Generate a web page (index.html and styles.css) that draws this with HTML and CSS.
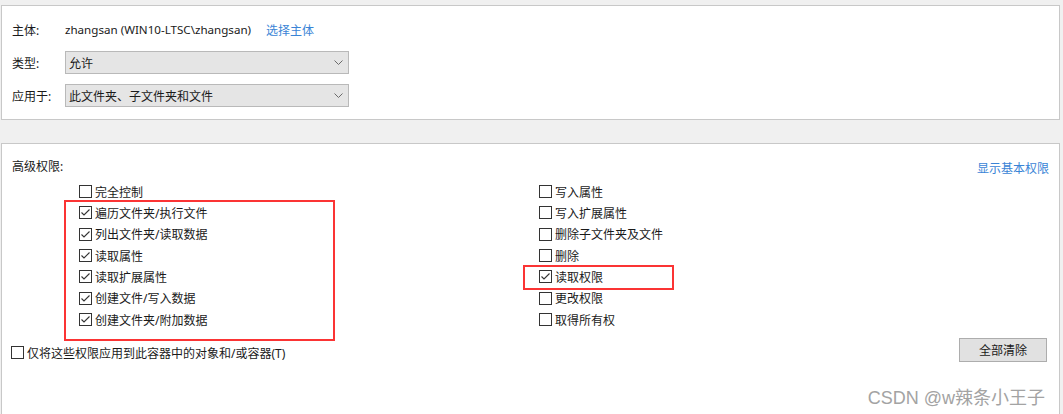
FILE: index.html
```html
<!DOCTYPE html>
<html>
<head>
<meta charset="utf-8">
<title>高级安全设置 - 权限项目</title>
<link rel="stylesheet" href="styles.css">
</head>
<body>

<div class="panel top">
  <div class="field">
    <span class="label">主体:</span>
    <span class="principal">zhangsan (WIN10-LTSC\zhangsan)</span>
    <a class="link pick" href="#">选择主体</a>
  </div>
  <div class="field">
    <span class="label">类型:</span>
    <div class="select">
      <span>允许</span>
      <svg class="chev" width="9" height="5" viewBox="0 0 9 5"><polyline points="0.5,0.5 4.5,4.5 8.5,0.5" fill="none" stroke="#6a6a6a" stroke-width="1"/></svg>
    </div>
  </div>
  <div class="field">
    <span class="label">应用于:</span>
    <div class="select">
      <span>此文件夹、子文件夹和文件</span>
      <svg class="chev" width="9" height="5" viewBox="0 0 9 5"><polyline points="0.5,0.5 4.5,4.5 8.5,0.5" fill="none" stroke="#6a6a6a" stroke-width="1"/></svg>
    </div>
  </div>
</div>

<div class="panel bottom">
  <div class="head">
    <span>高级权限:</span>
    <a class="link" href="#">显示基本权限</a>
  </div>

  <div class="perms">
    <div class="col">
      <label class="cb"><span class="box"></span>完全控制</label>
      <label class="cb"><span class="box on"><svg width="11" height="11" viewBox="0 0 11 11"><polyline points="1.5,5.5 4,8 9.5,2.5" fill="none" stroke="#333" stroke-width="1.1"/></svg></span>遍历文件夹/执行文件</label>
      <label class="cb"><span class="box on"><svg width="11" height="11" viewBox="0 0 11 11"><polyline points="1.5,5.5 4,8 9.5,2.5" fill="none" stroke="#333" stroke-width="1.1"/></svg></span>列出文件夹/读取数据</label>
      <label class="cb"><span class="box on"><svg width="11" height="11" viewBox="0 0 11 11"><polyline points="1.5,5.5 4,8 9.5,2.5" fill="none" stroke="#333" stroke-width="1.1"/></svg></span>读取属性</label>
      <label class="cb"><span class="box on"><svg width="11" height="11" viewBox="0 0 11 11"><polyline points="1.5,5.5 4,8 9.5,2.5" fill="none" stroke="#333" stroke-width="1.1"/></svg></span>读取扩展属性</label>
      <label class="cb"><span class="box on"><svg width="11" height="11" viewBox="0 0 11 11"><polyline points="1.5,5.5 4,8 9.5,2.5" fill="none" stroke="#333" stroke-width="1.1"/></svg></span>创建文件/写入数据</label>
      <label class="cb"><span class="box on"><svg width="11" height="11" viewBox="0 0 11 11"><polyline points="1.5,5.5 4,8 9.5,2.5" fill="none" stroke="#333" stroke-width="1.1"/></svg></span>创建文件夹/附加数据</label>
    </div>
    <div class="col">
      <label class="cb"><span class="box"></span>写入属性</label>
      <label class="cb"><span class="box"></span>写入扩展属性</label>
      <label class="cb"><span class="box"></span>删除子文件夹及文件</label>
      <label class="cb"><span class="box"></span>删除</label>
      <label class="cb"><span class="box on"><svg width="11" height="11" viewBox="0 0 11 11"><polyline points="1.5,5.5 4,8 9.5,2.5" fill="none" stroke="#333" stroke-width="1.1"/></svg></span>读取权限</label>
      <label class="cb"><span class="box"></span>更改权限</label>
      <label class="cb"><span class="box"></span>取得所有权</label>
    </div>
  </div>

  <div class="foot">
    <label class="cb only"><span class="box"></span>仅将这些权限应用到此容器中的对象和/或容器(T)</label>
    <button class="btn">全部清除</button>
  </div>

  <!-- annotation boxes drawn over the list -->
  <div class="mark mark-left"></div>
  <div class="mark mark-right"></div>

  <div class="watermark">CSDN @w辣条小王子</div>
</div>

</body>
</html>
```

FILE: styles.css
```css
body {
  margin: 0;
  background: #f0f0f0;
  font-family: "Noto Sans", "Noto Sans CJK SC", sans-serif;
  font-size: 12px;
  color: #1a1a1a;
  overflow: hidden;
}

.panel {
  background: #fff;
  border: 1px solid #c8c8c8;
  margin-left: 1px;
  width: 1059px;
}

.top {
  margin-top: 5px;
  height: 115px;
  box-sizing: border-box;
  padding: 12px 10px 0 10px;
  display: flex;
  flex-direction: column;
  gap: 10px;
}

.field {
  display: flex;
  align-items: center;
  height: 23px;
}

.label {
  width: 53px;
}

.principal {
  font-size: 11.6px;
}

.link {
  color: #3a84d6;
  text-decoration: none;
}

.pick {
  margin-left: 15px;
}

.select {
  width: 284px;
  height: 23px;
  box-sizing: border-box;
  border: 1px solid #b9b9b9;
  background: #e5e5e5;
  display: flex;
  align-items: center;
  justify-content: space-between;
  padding: 0 5px 0 3px;
}

.chev {
  display: block;
}

.bottom {
  position: relative;
  margin-top: 23px;
  height: 271px;
  border-bottom: none;
  box-sizing: border-box;
  padding: 13px 10px 0 10px;
}

.head {
  display: flex;
  justify-content: space-between;
  line-height: 20px;
  height: 20px;
}

.head .link {
  position: relative;
  top: 2px;
}

.perms {
  display: flex;
  margin-top: 4px;
  padding-left: 67px;
}

.col {
  width: 460px;
  display: flex;
  flex-direction: column;
}

.cb {
  display: flex;
  align-items: center;
  height: 21.33px;
}

.box {
  width: 13px;
  height: 13px;
  box-sizing: border-box;
  border: 1px solid #333;
  margin-right: 3px;
  display: flex;
  align-items: center;
  justify-content: center;
  flex: none;
}

.box svg {
  display: block;
}

.foot {
  display: flex;
  justify-content: space-between;
  align-items: flex-start;
  margin-top: 8px;
}

.only {
  margin-left: -1px;
  margin-top: 4px;
}

.btn {
  width: 88px;
  height: 24px;
  margin-right: 2px;
  border: 1px solid #adadad;
  background: #e1e1e1;
  font: inherit;
  color: #1a1a1a;
  padding: 0;
}

.mark {
  position: absolute;
  border: 2px solid #fb3434;
  box-sizing: border-box;
}

.mark-left {
  left: 62px;
  top: 56px;
  width: 271px;
  height: 141px;
}

.mark-right {
  left: 521px;
  top: 121px;
  width: 151px;
  height: 25px;
}

.watermark {
  position: absolute;
  right: 14px;
  top: 239px;
  font-family: "Liberation Sans", "Noto Sans CJK SC", sans-serif;
  font-size: 18px;
  color: #a3a3a3;
}
```
